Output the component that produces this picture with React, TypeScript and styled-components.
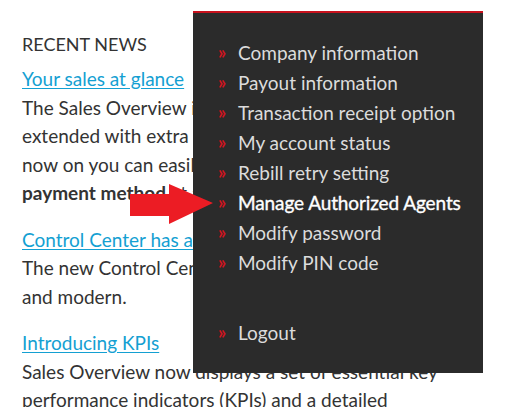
import React from 'react'
import styled, { createGlobalStyle } from 'styled-components'

const GlobalStyle = createGlobalStyle`
  html, body {
    margin: 0;
    padding: 0;
    background: #ffffff;
  }
  body {
    font-family: Lato, "Open Sans", "Liberation Sans", sans-serif;
    overflow: hidden;
  }
`

const Page = styled.div`
  position: relative;
  width: 510px;
  height: 407px;
  overflow: hidden;
`

const News = styled.section`
  padding: 30px 0 0 22px;
  width: 480px;
  color: #333333;
  font-size: 19px;
  line-height: 28.6px;
`

const Heading = styled.h3`
  margin: 0 0 6px;
  font-size: 18px;
  font-weight: 400;
  line-height: 29px;
  color: #333333;
`

const Item = styled.div`
  margin-bottom: 17.7px;
`

const NewsLink = styled.a`
  color: #14a0d2;
  text-decoration: underline;
  text-underline-offset: 2px;
  display: block;
`

const Body = styled.p`
  margin: 0;
  white-space: nowrap;
`

const Menu = styled.nav`
  position: absolute;
  left: 193px;
  top: 11px;
  width: 290px;
  height: 362px;
  background: #2b2b2b;
  border-top: 2px solid #c8121d;
  padding: 24px 0 0 25px;
  box-sizing: border-box;
`

const MenuList = styled.ul`
  list-style: none;
  margin: 0;
  padding: 0;
`

const MenuItem = styled.li<{ $active?: boolean; $gap?: boolean }>`
  display: flex;
  align-items: center;
  height: 30px;
  margin-top: ${p => (p.$gap ? '40px' : '0')};
  font-size: 19px;
  color: ${p => (p.$active ? '#ffffff' : '#dcdcdc')};
  -webkit-text-stroke: ${p => (p.$active ? '0.35px #ffffff' : '0')};
  letter-spacing: ${p => (p.$active ? '-0.1px' : '0')};
`

const Chevron = styled.span`
  width: 20px;
  flex: none;
  color: #d2141f;
  font-size: 18px;
  font-weight: 700;
  line-height: 1;
  -webkit-text-stroke: 0;
`

const Arrow = styled.svg`
  position: absolute;
  left: 130px;
  top: 183px;
`

const menu = [
  'Company information',
  'Payout information',
  'Transaction receipt option',
  'My account status',
  'Rebill retry setting',
  'Manage Authorized Agents',
  'Modify password',
  'Modify PIN code',
]

export default function App() {
  return (
    <Page>
      <GlobalStyle />
      <News>
        <Heading>RECENT NEWS</Heading>
        <Item>
          <NewsLink href="#">Your sales at glance</NewsLink>
          <Body>The Sales Overview is now available and was</Body>
          <Body>extended with extra widgets and filters. From</Body>
          <Body>now on you can easily see sales by country and</Body>
          <Body><b>payment method</b> at a single glance.</Body>
        </Item>
        <Item>
          <NewsLink href="#">Control Center has a new look</NewsLink>
          <Body>The new Control Center design is clean, fast</Body>
          <Body>and modern.</Body>
        </Item>
        <Item>
          <NewsLink href="#">Introducing KPIs</NewsLink>
          <Body>Sales Overview now displays a set of essential key</Body>
          <Body>performance indicators (KPIs) and a detailed</Body>
        </Item>
      </News>

      <Menu>
        <MenuList>
          {menu.map(label => (
            <MenuItem key={label} $active={label === 'Manage Authorized Agents'}>
              <Chevron>»</Chevron>
              {label}
            </MenuItem>
          ))}
          <MenuItem $gap>
            <Chevron>»</Chevron>
            Logout
          </MenuItem>
        </MenuList>
      </Menu>

      <Arrow width="84" height="46" viewBox="0 0 84 46">
        <polygon points="0,11 39,11 39,1 83,20 39,41 39,33 0,33" fill="#ec1c24" />
      </Arrow>
    </Page>
  )
}
